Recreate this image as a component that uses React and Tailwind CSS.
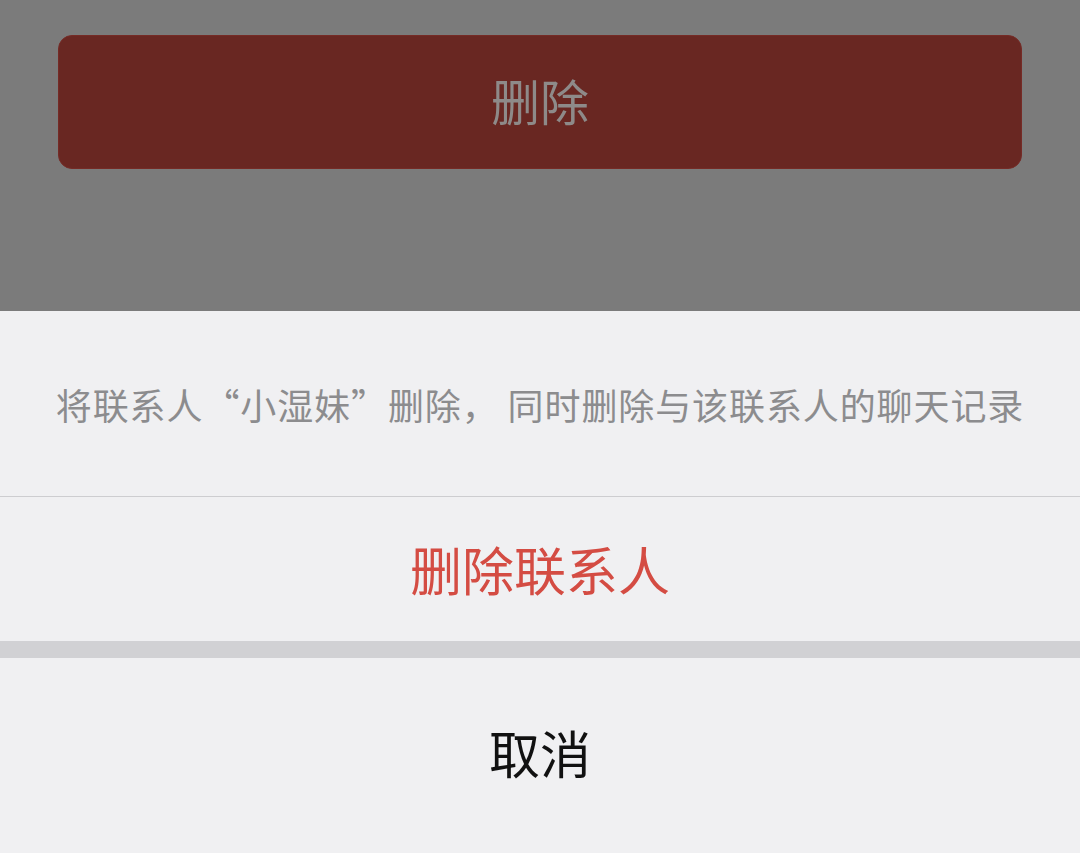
import React from 'react';

export default function App() {
  return (
    <div className="w-[1080px] h-[853px] flex flex-col overflow-hidden bg-[#f0f0f2] font-['Noto_Sans_CJK_SC',sans-serif]">
      {/* Dimmed page behind the sheet */}
      <div className="h-[311px] bg-[#7b7b7b] px-[58px] pt-[35px]">
        <div className="h-[134px] pb-[6px] rounded-[14px] bg-[#692722] border border-[#752b26] flex items-center justify-center">
          <span className="text-[49px] text-[#8e8a89] leading-none">删除</span>
        </div>
      </div>

      {/* Action sheet */}
      <div className="flex flex-col">
        <div className="h-[186px] flex items-center justify-center border-b border-[#cdcdd0]">
          <p className="text-[36px] text-[#8c8c8e] leading-none tracking-[0.9px]">将联系人“小湿妹”删除， 同时删除与该联系人的聊天记录</p>
        </div>
        <div className="h-[144px] flex items-center justify-center">
          <span className="text-[52px] text-[#d44c43] leading-none">删除联系人</span>
        </div>
        <div className="h-[17px] bg-[#d1d1d4]"></div>
        <div className="h-[194px] pb-[6px] flex items-center justify-center">
          <span className="text-[51px] text-[#111111] leading-none">取消</span>
        </div>
      </div>
    </div>
  );
}
